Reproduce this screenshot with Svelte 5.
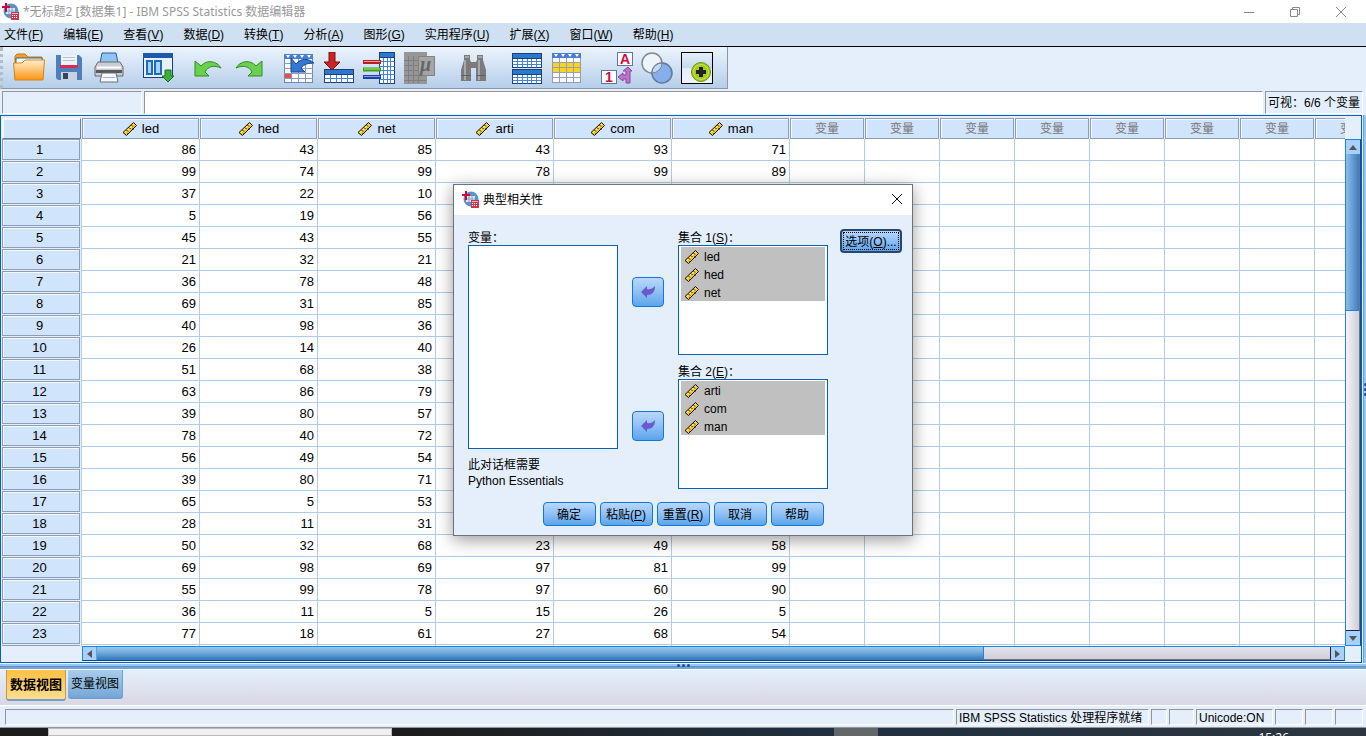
<script lang="ts">
    let menus = [
        { label: '文件', key: 'F' },
        { label: '编辑', key: 'E' },
        { label: '查看', key: 'V' },
        { label: '数据', key: 'D' },
        { label: '转换', key: 'T' },
        { label: '分析', key: 'A' },
        { label: '图形', key: 'G' },
        { label: '实用程序', key: 'U' },
        { label: '扩展', key: 'X' },
        { label: '窗口', key: 'W' },
        { label: '帮助', key: 'H' }
    ];

    // Toolbar groups, in display order
    let toolGroups = [
        { tools: ['open', 'save', 'print'] },
        { tools: ['recall'] },
        { tools: ['undo', 'redo'] },
        { tools: ['goto-case', 'goto-variable', 'variables', 'statistics'] },
        { tools: ['find'], wide: true },
        { tools: ['split', 'select'], wide: true },
        { tools: ['labels', 'sets', 'customize'] }
    ];

    let columns = ['led', 'hed', 'net', 'arti', 'com', 'man'];
    let emptyColumns = Array(8).fill('变量');

    let rows = [
        [86, 43, 85, 43, 93, 71],
        [99, 74, 99, 78, 99, 89],
        [37, 22, 10],
        [5, 19, 56],
        [45, 43, 55],
        [21, 32, 21],
        [36, 78, 48],
        [69, 31, 85],
        [40, 98, 36],
        [26, 14, 40],
        [51, 68, 38],
        [63, 86, 79],
        [39, 80, 57],
        [78, 40, 72],
        [56, 49, 54],
        [39, 80, 71],
        [65, 5, 53],
        [28, 11, 31],
        [50, 32, 68, 23, 49, 58],
        [69, 98, 69, 97, 81, 99],
        [55, 99, 78, 97, 60, 90],
        [36, 11, 5, 15, 26, 5],
        [77, 18, 61, 27, 68, 54],
        []
    ];

    let sets = [
        { label: '集合 1', key: 'S', vars: ['led', 'hed', 'net'] },
        { label: '集合 2', key: 'E', vars: ['arti', 'com', 'man'] }
    ];

    let dialogButtons = [
        { label: '确定' },
        { label: '粘贴', key: 'P' },
        { label: '重置', key: 'R' },
        { label: '取消' },
        { label: '帮助' }
    ];

    let cellName = $state('');
    let cellValue = $state('');
    let view = $state('data');
    let showDialog = $state(true);
</script>

{#snippet appIcon()}
    <svg class="app-icon" width="17" height="17" viewBox="0 0 17 17">
        <circle cx="9" cy="8" r="7.500" fill="#5d93c4" />
        <path d="M4 5h9v6H4z" fill="#dbe9f5" />
        <path d="M4 8h9M7 5v6M10 5v6" stroke="#7ba6cf" />
        <path d="M4 0v9M0 4h8" stroke="#d3003a" stroke-width="2" />
        <rect x="9" y="9" width="8" height="8" fill="#c8384f" />
        <path d="M10 12.500h6M10 14.500h6" stroke="#fff" stroke-dasharray="1 1" />
        <path d="M10 10.500h6" stroke="#eeb4bd" />
    </svg>
{/snippet}

{#snippet ruler()}
    <svg class="ruler" width="16" height="16" viewBox="0 0 16 16">
        <path d="M1 11.500 11.500 1.500 14.500 4.500 4.500 14.500z" fill="#fdc61d" stroke="#111" />
        <path d="M3 11.500 11.500 3.500" stroke="#fff3b8" stroke-width="1" />
        <path d="M4.500 9l1.500 1.500M7 6.500 8.500 8M9.500 4l1.500 1.500M5.500 12l1 1M8 10l1 1M10.500 7.500l1 1" stroke="#111" />
    </svg>
{/snippet}

{#snippet grid(x, y, w, h, rowsCount, colsCount)}
    <rect {x} {y} width={w} height={h} fill="#fff" stroke="#1c3f7c" />
    {#each Array(rowsCount - 1) as _, i}
        <path d="M{x} {y + 5 + Math.round(((h - 5) * (i + 1)) / rowsCount)}h{w}" stroke="#3f86d6" />
    {/each}
    {#each Array(colsCount - 1) as _, i}
        <path d="M{x + Math.round((w * (i + 1)) / colsCount)} {y + 5}v{h - 5}" stroke="#3f86d6" />
    {/each}
    <rect {x} {y} width={w} height="5" fill="#2a79cf" stroke="#1c3f7c" />
{/snippet}

{#snippet toolIcon(name)}
    <svg width="32" height="32" viewBox="0 0 32 32" fill="none">
        {#if name === 'open'}
            <path d="M2 27V4l2-2h8l3 3h14v22z" fill="#f5a21c" stroke="#c97a08" />
            <path d="M3 6h26v6H3z" fill="#fff" stroke="#2c63a5" />
            <path d="M2 28 0.500 11H9l3-3h19.500L30 28z" fill="url(#folder)" stroke="#d98214" />
        {:else if name === 'save'}
            <path d="M3 3h23l3 3v22H5l-2-2z" fill="#4d7fb8" />
            <path d="M8 3h16v11H8z" fill="#eef2f7" />
            <path d="M10 5.500h12M10 8.500h12" stroke="#b9c3cf" />
            <path d="M7 13h18v3H7z" fill="#d62c56" />
            <path d="M8 20h16v8H8z" fill="#c9d3de" />
            <path d="M10 21h5v6h-5z" fill="#33455c" />
        {:else if name === 'print'}
            <path d="M9 1h14l2 10H7z" fill="#8fc4f3" stroke="#2c5d9c" />
            <path d="M5 10h22l3 5v9H2v-9z" fill="#c9ccd0" stroke="#666a70" />
            <path d="M4 15.500h24" stroke="#fff" stroke-width="2" />
            <path d="M3 19.500h26" stroke="#55585d" stroke-width="3" />
            <path d="M9 21h14l2 9H7z" fill="#f6f8fb" stroke="#6b7077" />
            <path d="M10 25.500h12" stroke="#9bb6d4" />
        {:else if name === 'recall'}
            <rect x="0.500" y="1.500" width="29" height="24" fill="#e7f1fb" stroke="#1c3f7c" />
            <path d="M0 1h30v5H0z" fill="#1d58ac" />
            <path d="M4 9h5v13H4zM12 9h6v13h-6z" fill="#a8d3f7" stroke="#1d6cc0" stroke-width="2" />
            <path d="M22 18h6v6h3l-6 6-6-6h3z" fill="#3caf3a" stroke="#14731d" />
        {:else if name === 'undo'}
            <path d="M2 9v15h14l-4-4c3-6 9-7 16-4-4-7-14-9-20-2z" fill="#6cd04f" stroke="#2e8d23" />
        {:else if name === 'redo'}
            <path d="M29 9v15H15l4-4c-3-6-9-7-16-4 4-7 14-9 20-2z" fill="#6cd04f" stroke="#2e8d23" />
        {:else if name === 'goto-case'}
            <rect x="1.500" y="2.500" width="28" height="28" fill="#f7f9fc" stroke="#6e89b5" />
            <path d="M1 2h29v5H1z" fill="#4a7fd0" />
            <path d="M3 3h4l-2 3zM10 3h4l-2 3zM17 3h4l-2 3zM24 3h4l-2 3z" fill="#fff" />
            <path d="M1 11.500h29M1 16.500h29M1 21.500h29M1 26.500h29M8.500 7v23M15.500 7v23M22.500 7v23" stroke="#8d9db3" />
            <path d="M2 22h6v4H2z" fill="#ee4a50" />
            <path d="M8 6v14h14l-4-4c3-4 8-5 13-5-6-5-13-5-18 1z" fill="#3477d0" stroke="#174a92" />
        {:else if name === 'goto-variable'}
            {@render grid(1.5, 17.5, 29, 13, 2, 5)}
            <path d="M6 0h6v10h5l-8 8-8-8h5z" fill="#cf2227" stroke="#7a1013" />
        {:else if name === 'variables'}
            {@render grid(16.5, 0.5, 15, 31, 6, 4)}
            <path d="M0 10h18" stroke="#b31f25" stroke-width="4" />
            <path d="M1 9.500h16" stroke="#f59a90" />
            <path d="M0 17.500h18" stroke="#3f9c1f" stroke-width="4" />
            <path d="M1 17h16" stroke="#a9ef6a" />
            <path d="M0 25h18" stroke="#1d3fae" stroke-width="4" />
            <path d="M1 24.500h16" stroke="#7da4f2" />
        {:else if name === 'statistics'}
            <path d="M1 0h23v32H1z" fill="#969696" />
            <path d="M1 8.500h22M1 13.500h22M1 18.500h22M1 23.500h22M1 28.500h22M5.500 4v27M10.500 4v27M15.500 4v27" stroke="#7f7f7f" />
            <rect x="15.500" y="4.500" width="16" height="19" fill="#a5a5a5" stroke="#838383" />
            <text x="17" y="19" font-size="20" font-style="italic" font-weight="bold" font-family="Liberation Serif, serif" fill="#666">μ</text>
        {:else if name === 'find'}
            <path d="M7 3h6v5l1 2h5l1-2V3h6v5l3 10v11H19V16h-5v13H4V18L7 8z" fill="#7b7b7b" />
            <path d="M8 8v20M22 8v20M8 5h4M21 5h4" stroke="#a8a8a8" stroke-width="2" />
            <path d="M4 23.500h10M19 23.500h10" stroke="#5f5f5f" />
        {:else if name === 'split'}
            {@render grid(1.5, 1.5, 29, 14, 3, 6)}
            {@render grid(1.5, 17.5, 29, 14, 3, 6)}
        {:else if name === 'select'}
            <rect x="1.500" y="1.500" width="28" height="29" fill="#f7f9fc" stroke="#8d9db3" />
            <path d="M1 1h29v5H1z" fill="#4a7fd0" />
            <path d="M3 2h4l-2 3zM10 2h4l-2 3zM17 2h4l-2 3zM24 2h4l-2 3z" fill="#fff" />
            <path d="M2 11h27v10H2z" fill="#fbd21f" />
            <path d="M1 10.500h29M1 15.500h29M1 20.500h29M1 25.500h29M8.500 6v24M15.500 6v24M22.500 6v24" stroke="#98a0a8" />
        {:else if name === 'labels'}
            <rect x="16.500" y="0.500" width="15" height="13" fill="#fff" stroke="#5b77a6" />
            <text x="19" y="12" font-size="14" font-weight="bold" font-family="Liberation Sans, sans-serif" fill="#d20a45">A</text>
            <rect x="0.500" y="18.500" width="15" height="13" fill="#fff" stroke="#5b77a6" />
            <text x="4" y="30" font-size="14" font-weight="bold" font-family="Liberation Sans, sans-serif" fill="#d20a45">1</text>
            <path d="m17 25 5-4v2h3v-4h-3l5-4 4 4h-2v12h-4v-4h-3v2z" fill="#bd73c8" stroke="#8a4798" />
        {:else if name === 'sets'}
            <circle cx="11" cy="11" r="10" fill="#eef4fb" stroke="#83888f" stroke-width="1.500" />
            <circle cx="21" cy="21" r="10" fill="#85aeec" stroke="#62779a" stroke-width="1.500" />
            <path d="M11 21A10 10 0 0 1 21 11 10 10 0 0 1 11 21z" fill="#c5d9f3" stroke="#7b8694" />
        {:else}
            <rect x="0.500" y="0.500" width="31" height="31" fill="url(#blank)" stroke="#000" />
            <circle cx="20" cy="20" r="9.500" fill="#a5cb1c" stroke="#6f9310" />
            <circle cx="20" cy="20" r="7.500" stroke="#c7e35a" />
            <path d="M20 15v10M15 20h10" stroke="#222" stroke-width="4" />
        {/if}
    </svg>
{/snippet}

{#snippet arrow()}
    <svg width="14" height="14" viewBox="0 0 14 14">
        <path d="M0 7 6 1v3c4 1 6-1 8-3 0 6-3 9-8 9v3z" fill="#6a5acd" />
    </svg>
{/snippet}

<svg class="defs" width="0" height="0" aria-hidden="true">
    <defs>
        <linearGradient id="folder" x2="0" y2="1">
            <stop offset="0" stop-color="#fff0cf" />
            <stop offset="1" stop-color="#fb9414" />
        </linearGradient>
        <linearGradient id="blank" x2="0" y2="1">
            <stop offset="0" stop-color="#e6f0fa" />
            <stop offset="0.5" stop-color="#c3daf0" />
            <stop offset="0.52" stop-color="#e4eefa" />
            <stop offset="1" stop-color="#eef5fc" />
        </linearGradient>
    </defs>
</svg>

<div class="window">
    <header class="titlebar">
        {@render appIcon()}
        <h1>*无标题2 [数据集1] - IBM SPSS Statistics 数据编辑器</h1>
        <div class="window-buttons">
            <button aria-label="最小化">
                <svg width="12" height="12" viewBox="0 0 12 12"><path d="M1 6.500h10" stroke="#888" /></svg>
            </button>
            <button aria-label="还原">
                <svg width="12" height="12" viewBox="0 0 12 12" fill="none" stroke="#888">
                    <path d="M1.500 3.500h7v7h-7zM3.500 3.500v-2h7v7h-2" />
                </svg>
            </button>
            <button aria-label="关闭">
                <svg width="12" height="12" viewBox="0 0 12 12"><path d="m1 1 10 10M11 1 1 11" stroke="#888" /></svg>
            </button>
        </div>
    </header>

    <nav class="menubar">
        {#each menus as menu}
            <button>{menu.label}(<u>{menu.key}</u>)</button>
        {/each}
    </nav>

    <div class="toolbar">
        {#each toolGroups as group}
            <div class="tool-group" class:wide={group.wide}>
                {#each group.tools as tool}
                    <button aria-label={tool}>{@render toolIcon(tool)}</button>
                {/each}
            </div>
        {/each}
    </div>

    <div class="cell-editor">
        <input class="cell-name" aria-label="单元格" readonly bind:value={cellName} />
        <input class="cell-value" aria-label="值" bind:value={cellValue} />
        <span class="visible-count">可视：6/6 个变量</span>
    </div>

    <main class="workspace">
        <div class="sheet">
            <div class="viewport">
                <table>
                    <colgroup>
                        <col class="row-col" />
                        {#each columns as _}<col class="var-col" />{/each}
                        {#each emptyColumns as _}<col class="empty-col" />{/each}
                    </colgroup>
                    <thead>
                        <tr>
                            <td class="corner"><div class="cap"></div></td>
                            {#each columns as column}
                                <th><div class="cap">{@render ruler()}{column}</div></th>
                            {/each}
                            {#each emptyColumns as column}
                                <th class="unused"><div class="cap">{column}</div></th>
                            {/each}
                        </tr>
                    </thead>
                    <tbody>
                        {#each rows as row, i}
                            <tr>
                                <th><div class="cap">{row.length ? i + 1 : ''}</div></th>
                                {#each [...columns, ...emptyColumns] as _, j}
                                    <td>{row[j] ?? ''}</td>
                                {/each}
                            </tr>
                        {/each}
                    </tbody>
                </table>
            </div>
            <div class="vscroll">
                <button aria-label="向上"><svg width="8" height="5" viewBox="0 0 8 5"><path d="M4 0l4 5H0z" fill="#555" /></svg></button>
                <div class="vtrack"><div class="vthumb"></div></div>
                <button aria-label="向下"><svg width="8" height="5" viewBox="0 0 8 5"><path d="M0 0h8L4 5z" fill="#555" /></svg></button>
            </div>
            <div class="hscroll">
                <button aria-label="向左"><svg width="5" height="8" viewBox="0 0 5 8"><path d="M5 0v8L0 4z" fill="#555" /></svg></button>
                <div class="htrack"><div class="hthumb"></div></div>
                <button aria-label="向右"><svg width="5" height="8" viewBox="0 0 5 8"><path d="M0 0l5 4-5 4z" fill="#555" /></svg></button>
            </div>
        </div>
        <div class="side-splitter"><i></i><i></i><i></i></div>
    </main>

    <div class="splitter"><i></i><i></i><i></i></div>

    <div class="view-tabs">
        <button class:active={view === 'data'} onclick={() => (view = 'data')}>数据视图</button>
        <button class:active={view === 'variable'} onclick={() => (view = 'variable')}>变量视图</button>
    </div>

    <footer class="statusbar">
        <span class="message"></span>
        <span class="processor">IBM SPSS Statistics 处理程序就绪</span>
        <span class="tiny"></span>
        <span class="small"></span>
        <span class="unicode">Unicode:ON</span>
        <span class="small"></span>
        <span class="small"></span>
        <span class="small"></span>
    </footer>

    <div class="taskbar">
        <div class="search"></div>
        <div class="task"></div>
        <time>15:26</time>
    </div>

    {#if showDialog}
        <div class="dialog" role="dialog" aria-labelledby="dialog-title">
            <div class="dialog-title">
                {@render appIcon()}
                <h2 id="dialog-title">典型相关性</h2>
                <button aria-label="关闭" onclick={() => (showDialog = false)}>
                    <svg width="12" height="12" viewBox="0 0 12 12"><path d="m1 1 10 10M11 1 1 11" stroke="#111" /></svg>
                </button>
            </div>
            <div class="dialog-body">
                <div class="source">
                    <span class="label" id="source-label">变量：</span>
                    <ul class="list" role="listbox" aria-labelledby="source-label"></ul>
                    <p>此对话框需要<br />Python Essentials</p>
                </div>
                <div class="sets">
                    {#each sets as set, i}
                        <div class="set">
                            <button class="move" aria-label="移动">{@render arrow()}</button>
                            <div>
                                <span class="label" id="set-{i}">{set.label}(<u>{set.key}</u>)：</span>
                                <ul class="list" role="listbox" aria-labelledby="set-{i}">
                                    {#each set.vars as name}
                                        <li role="option" aria-selected="true">{@render ruler()}{name}</li>
                                    {/each}
                                </ul>
                            </div>
                        </div>
                    {/each}
                </div>
                <button class="push options">选项(<u>O</u>)...</button>
            </div>
            <div class="dialog-actions">
                {#each dialogButtons as button}
                    <button class="push">{button.label}{#if button.key}(<u>{button.key}</u>){/if}</button>
                {/each}
            </div>
        </div>
    {/if}
</div>

<style>
    :global(body) {
        margin: 0;
    }

    .window {
        position: relative;
        display: flex;
        flex-direction: column;
        height: 100vh;
        overflow: hidden;
        background: #e4effb;
        color: #000;
        font-family: 'Liberation Sans', 'Noto Sans CJK SC', sans-serif;
        font-size: 12px;
        line-height: 16px;
    }

    .window * {
        box-sizing: border-box;
    }

    .defs {
        position: absolute;
    }

    svg {
        display: block;
        flex: none;
    }

    button {
        display: flex;
        align-items: center;
        justify-content: center;
        padding: 0;
        border: none;
        background: none;
        color: inherit;
        font: inherit;
        white-space: nowrap;
    }

    h1, h2, p, ul {
        margin: 0;
        padding: 0;
        font-size: 12px;
        font-weight: normal;
        list-style: none;
    }

    .titlebar {
        display: flex;
        align-items: center;
        flex: none;
        gap: 4px;
        height: 23px;
        padding-left: 2px;
        background: #fff;
    }

    .titlebar h1 {
        flex: 1;
        color: #999;
        font-family: 'Noto Sans', 'Noto Sans CJK SC', sans-serif;
    }

    .window-buttons {
        display: flex;
        padding-right: 2px;
    }

    .window-buttons button {
        width: 46px;
        height: 20px;
    }

    .menubar {
        display: flex;
        flex: none;
        gap: 20px;
        height: 24px;
        padding: 1px 0 0 4px;
        border-bottom: 1px solid #000;
        background: #cee0f1;
    }

    .toolbar {
        display: flex;
        flex: none;
        align-self: flex-start;
        gap: 10px;
        height: 42px;
        padding: 0 10px 0 6px;
        border-right: 1px solid #8f969e;
        border-bottom: 1px solid #8f969e;
        border-left: 3px dotted #b3bdca;
        background: linear-gradient(#ecf4fd, #b5cee9);
    }

    .tool-group {
        display: flex;
    }

    .tool-group.wide {
        margin-left: 4px;
    }

    .tool-group button {
        width: 40px;
        height: 42px;
    }

    .cell-editor {
        display: flex;
        flex: none;
        gap: 2px;
        height: 26px;
        padding: 2px 3px 1px 2px;
    }

    .cell-editor input,
    .visible-count {
        border: 1px solid;
        border-color: #8f969e #fff #fff #8f969e;
        background: #fff;
        font: inherit;
        outline: none;
    }

    .cell-editor .cell-name {
        width: 140px;
        background: #e4effb;
    }

    .cell-editor .cell-value {
        flex: 1;
    }

    .cell-editor .visible-count {
        padding: 3px 2px;
        background: #e4effb;
        white-space: nowrap;
    }

    .workspace {
        display: flex;
        flex: 1;
        gap: 1px;
        min-height: 0;
    }

    .sheet {
        display: grid;
        flex: 1;
        grid-template-columns: minmax(0, 1fr) 16px;
        grid-template-rows: minmax(0, 1fr) 15px;
        min-width: 0;
        padding: 1px 0 1px 1px;
        border: 1px solid #0063b5;
    }

    .viewport {
        overflow: hidden;
    }

    table {
        width: 1388px;
        border-collapse: separate;
        border-spacing: 0;
        table-layout: fixed;
        font-size: 13px;
    }

    .row-col {
        width: 80px;
    }

    .var-col {
        width: 118px;
    }

    .empty-col {
        width: 75px;
    }

    th, td {
        height: 22px;
        padding: 0;
        font-weight: normal;
    }

    tbody td {
        padding-right: 3px;
        border-right: 1px solid #aecbe9;
        border-bottom: 1px solid #aecbe9;
        background: #fff;
        text-align: right;
    }

    tbody th {
        border-right: 1px solid #aecbe9;
        vertical-align: top;
    }

    .cap {
        display: flex;
        align-items: center;
        justify-content: center;
        height: 21px;
        margin-right: 1px;
        border: 1px solid #8d9db5;
        background: #d0e4fc;
        box-shadow: inset 1px 1px #f4f9ff;
    }

    thead .cap {
        padding-top: 2px;
    }

    tbody .cap {
        padding-right: 3px;
    }

    .corner .cap {
        border-color: #f4f9ff #6f7f95 #6f7f95 #f4f9ff;
    }

    .unused .cap {
        color: #777;
        font-size: 12px;
    }

    .ruler {
        margin-right: 4px;
    }

    .vscroll {
        display: flex;
        flex-direction: column;
        margin-top: 22px;
        border: 1px solid #1a86e0;
        border-right-color: #1f4e87;
        background: #a9cffb;
    }

    .vscroll button {
        width: 14px;
        height: 14px;
    }

    .vtrack {
        flex: 1;
        background: linear-gradient(90deg, #f4f4f7, #cfcdd8);
        border-right: 1px solid #777;
        border-bottom: 1px solid #224;
    }

    .vthumb {
        height: 33%;
        border-bottom: 1px solid #1a86e0;
        background: linear-gradient(90deg, #8ebde6, #3a7ec0);
    }

    .hscroll {
        display: flex;
        margin-left: 80px;
        border: 1px solid #1a86e0;
        border-bottom-color: #0b4a8c;
        background: #a9cffb;
    }

    .hscroll button {
        width: 13px;
        height: 13px;
    }

    .htrack {
        flex: 1;
        border-right: 1px solid #224;
        border-bottom: 1px solid #777;
        background: linear-gradient(#e6e4ec, #cfcdd8);
    }

    .hthumb {
        width: 72%;
        height: 13px;
        border-right: 1px solid #1a86e0;
        border-left: 1px solid #4fa5ee;
        background: linear-gradient(#9bc8ec, #6aa5d8 50%, #2f76bb);
    }

    .side-splitter {
        display: flex;
        flex-direction: column;
        align-items: center;
        justify-content: center;
        gap: 2px;
        width: 3px;
        border-left: 1px solid #6fa0d4;
        background: #93c7f8;
    }

    .splitter {
        display: flex;
        flex: none;
        align-items: center;
        justify-content: center;
        gap: 2px;
        height: 6px;
        border-bottom: 2px solid #74a3d4;
        background: linear-gradient(#e4effb 1px, #93c7f8 1px 3px, #5e8fc4 3px);
    }

    .splitter i,
    .side-splitter i {
        width: 3px;
        height: 3px;
        border-radius: 2px;
        background: #234a8f;
    }

    .view-tabs {
        display: flex;
        flex: none;
        align-items: flex-start;
        gap: 2px;
        height: 36px;
        padding-left: 6px;
        border-top: 1px solid #fff;
        background: linear-gradient(#e4effb, #d9d7e3);
    }

    .view-tabs button {
        height: 29px;
        padding: 0 3px;
        border-right: 1px solid #6fa0d4;
        border-bottom: 2px solid #6fa0d4;
        border-radius: 0 0 3px 3px;
        background: linear-gradient(#a8cdec, #77a8d6);
    }

    .view-tabs .active {
        height: 31px;
        border: 1px solid #c99a3c;
        border-top: none;
        border-bottom: 2px solid #6fa0d4;
        background: linear-gradient(#fdc044, #ffdd8f);
        font-size: 13px;
        font-weight: bold;
    }

    .statusbar {
        display: flex;
        flex: none;
        gap: 2px;
        height: 23px;
        padding: 3px 3px 2px 5px;
        border-top: 1px solid #fff;
        border-bottom: 1px solid #8f969e;
    }

    .statusbar span {
        flex: none;
        border: 1px solid;
        border-color: #8f969e #fff #fff #8f969e;
        padding-left: 2px;
        white-space: nowrap;
    }

    .statusbar .message {
        flex: 1;
    }

    .processor {
        width: 193px;
    }

    .tiny {
        width: 16px;
    }

    .small {
        width: 28px;
    }

    .tiny + .small {
        width: 25px;
    }

    .unicode {
        width: 77px;
    }

    .taskbar {
        display: flex;
        flex: none;
        height: 8px;
        overflow: hidden;
        padding: 0 77px 0 48px;
        background: linear-gradient(90deg, #1c1c1c 30%, #20303f 60%, #2d3640);
    }

    .search {
        width: 344px;
        border: 1px solid #bbb;
        background: #f0f0f0;
    }

    .task {
        width: 44px;
        margin: 0 auto 0 442px;
        background: #64676a;
    }

    .taskbar time {
        padding-top: 2px;
        color: #fff;
        font-family: 'Open Sans', sans-serif;
    }

    .dialog {
        position: absolute;
        top: 184px;
        left: 50%;
        width: 460px;
        margin-left: -230px;
        border: 1px solid #6d7278;
        background: #e4effb;
        box-shadow: 0 4px 16px rgba(0, 0, 0, 0.4);
    }

    .dialog-title {
        display: flex;
        align-items: center;
        gap: 4px;
        height: 30px;
        padding: 0 9px 2px 8px;
        background: #fff;
    }

    .dialog-title h2 {
        flex: 1;
        padding-top: 2px;
    }

    .dialog-body {
        display: flex;
        gap: 12px;
        padding: 14px 10px 0 14px;
    }

    .source {
        width: 150px;
        margin-right: 2px;
    }

    .sets {
        display: flex;
        flex-direction: column;
        gap: 8px;
    }

    .set {
        display: flex;
        gap: 14px;
    }

    .label {
        display: block;
        height: 16px;
        line-height: 18px;
    }

    .list {
        width: 150px;
        height: 110px;
        padding: 1px 2px;
        border: 1px solid #0063b5;
        background: #fff;
    }

    .source .list {
        height: 204px;
        margin-bottom: 8px;
    }

    .list li {
        display: flex;
        align-items: center;
        height: 18px;
        padding: 1px 0 0 3px;
        background: #c0c0c0;
    }

    .push,
    .move {
        border: 1px solid #1079d8;
        border-radius: 4px;
        background: linear-gradient(#b9d8fb, #8fc0f5 50%, #5ba4ea);
    }

    .move {
        width: 32px;
        height: 30px;
        margin-top: 48px;
    }

    .push {
        width: 53px;
        height: 24px;
        padding-top: 2px;
    }

    .push.options {
        width: 62px;
        border: 2px solid #24476e;
        outline: 1px dotted #000;
        outline-offset: -4px;
    }

    .dialog-actions {
        display: flex;
        justify-content: center;
        gap: 4px;
        padding: 13px 0 9px;
    }
</style>
